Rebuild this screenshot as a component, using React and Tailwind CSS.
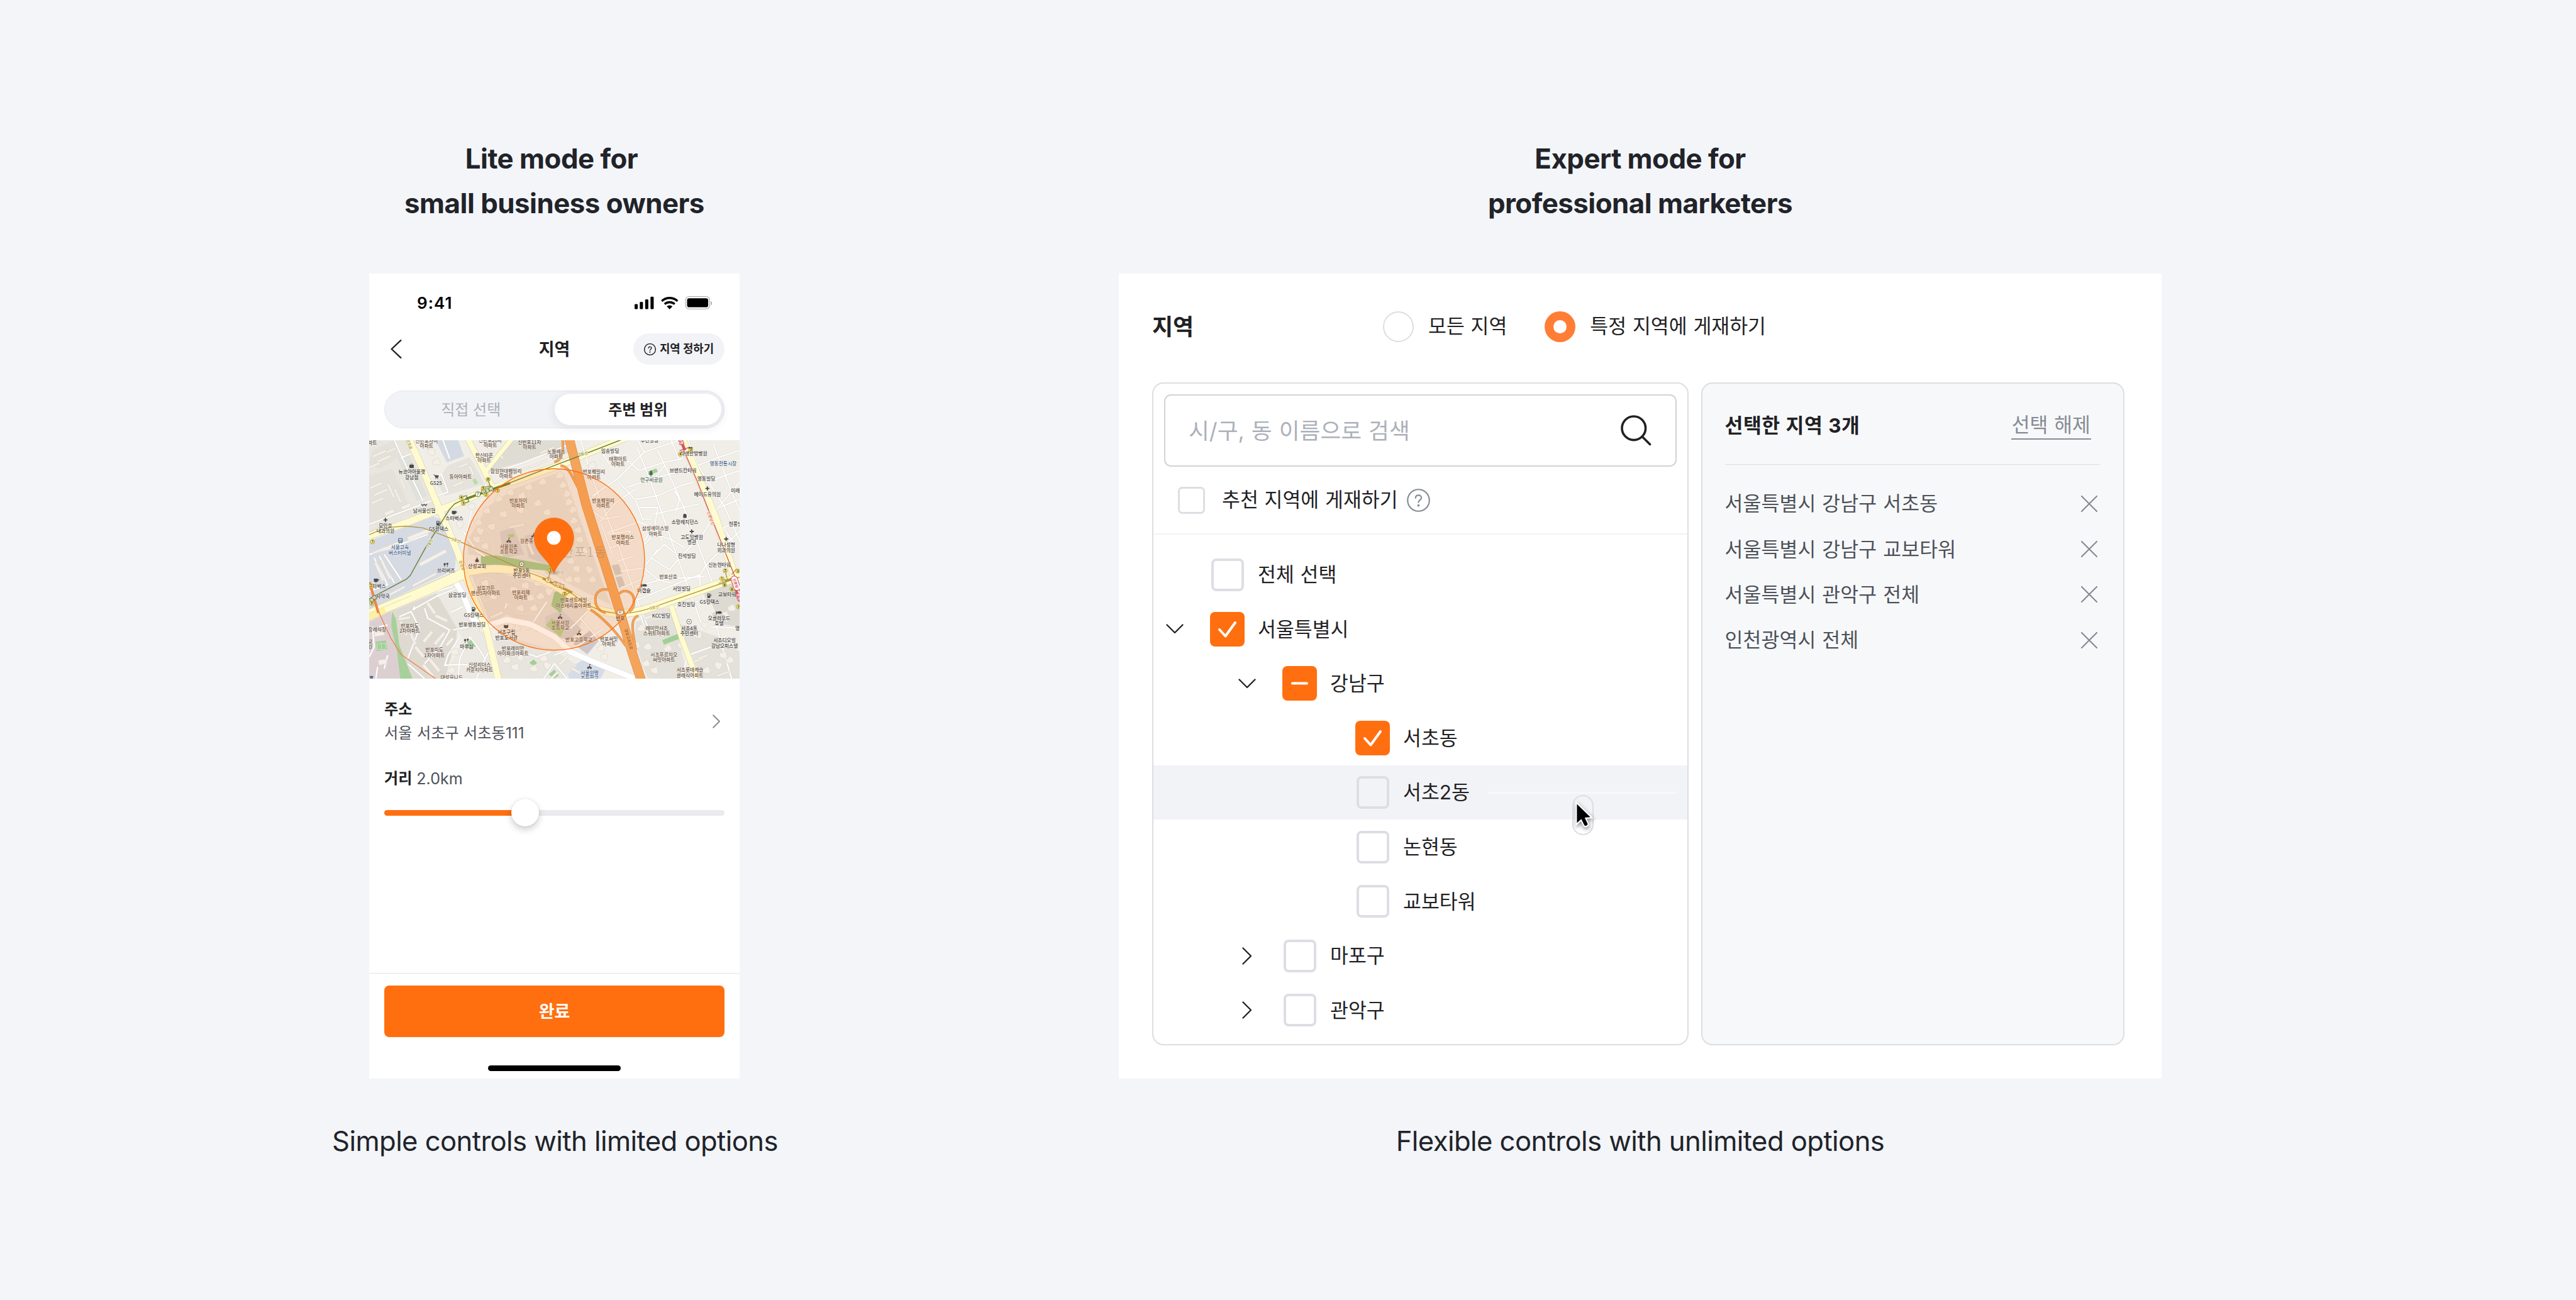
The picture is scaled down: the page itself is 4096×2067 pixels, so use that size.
import React from "react";

const BROWN = "#66503f";
const DARK = "#474440";
const NAVY = "#46628a";

/* ---------- Map data (drawn in a 2208 x 1419 space) ---------- */

const BLOCKS = [
  ["#e9e6df", "M0 0H215L400 400L0 545Z"],
  ["#e4e1da", "M20 60L150 0L200 90L60 170L0 140Z"],
  ["#e4e1da", "M0 210L140 170L250 420L0 500Z"],
  ["#dfe1da", "M165 100L240 90L345 330L285 360Z"],
  ["#d3dae3", "M395 0H530L566 95L463 132Z"],
  ["#e6e3dc", "M470 150L600 100L690 260L450 330L400 250Z"],
  ["#dfdcd4", "M865 0H1170L1104 75L700 190L760 110Z"],
  ["#dfdcd4", "M1104 0H1165L1190 70L1104 110Z"],
  ["#d5dae3", "M0 600L380 455L430 470L520 655L510 770L0 1005Z"],
  ["#dccfd2", "M0 1080L130 1018L190 1419H0Z"],
  ["#dedad1", "M140 1015L270 960L500 870L540 960L520 1180L450 1419H255L185 1240Z"],
  ["#ece9e2", "M400 910L520 860L600 1060L700 1110L740 1419H450L560 1180Z"],
  ["#e6e1d9", "M585 600L700 400L860 290L1104 200L1160 200L1290 560L1440 980L1200 860L1060 770L665 690L590 680Z"],
  ["#e4dfd7", "M610 800L760 785L1000 850L1180 930L1310 1000L1240 1130L1104 1160L820 1040L720 1090Z"],
  ["#d6d2d0", "M780 545L860 520L925 680L800 700Z"],
  ["#d6d2d0", "M925 570L1010 545L1060 740L950 700Z"],
  ["#d6d2d0", "M1050 1050L1150 1010L1270 1130L1190 1190L1050 1150Z"],
  ["#cfc8ca", "M1215 1210L1320 1130L1380 1180L1300 1275Z"],
  ["#d5dce6", "M1180 1360L1290 1300L1410 1360L1380 1419H1190Z"],
  ["#e8e5de", "M740 1190L860 1180L1104 1250L1240 1340L1160 1419H790Z"],
  ["#e3e1d9", "M1590 1080L1810 1030L1900 1419H1660L1580 1200Z"],
  ["#e3e1d9", "M1840 1090L2080 1170L2208 1260V1419H1980Z"],
  ["#dddad2", "M1990 900L2208 830V1110L2070 1090Z"],
  ["#e8e5de", "M1610 1000L1790 1000L1800 1060L1620 1080Z"],
  ["#cfcdca", "M1445 745L1487 738L1508 795L1468 805Z"],
  ["#cfcdca", "M1468 815L1505 810L1527 868L1490 880Z"],
];

const GREENS = [
  ["#a7d09b", "M135 1015L160 1065L180 1220L258 1419H186L165 1255L132 1110Z"],
  ["#a3c98c", "M666 688L760 686L1090 745L1078 778L880 760L666 748Z"],
  ["#a3c98c", "M1104 905L1145 890L1185 925L1140 1028L1085 985Z"],
  ["#a3cf97", "M1652 190L1712 168L1720 188L1660 212Z"],
  ["#a3cf97", "M1747 1190L1845 1150L1855 1180L1757 1217Z"],
  ["#a3cf97", "M38 1200L100 1192L108 1245L46 1255Z"],
  ["#b9dca8", "M615 235L635 228L650 255L628 266Z"],
  ["#a3cf97", "M565 1225L608 1185L637 1225L600 1243Z"],
  ["#b4cf8c", "M826 562L862 556L866 576L832 580Z"],
  ["#b4cf8c", "M1055 1100L1090 1060L1160 1130L1140 1170Z"],
  ["#a3cf97", "M955 1325L980 1305L1002 1325L978 1342Z"],
  ["#a3cf97", "M1070 1395L1104 1365L1130 1400L1104 1419Z"],
];

const MINOR_ROADS = [
  "M0 500L200 425L370 360", "M150 0L200 110L320 360", "M190 105L250 80", "M365 340L470 310L430 200L360 220",
  "M440 0L480 110", "M700 210L900 140L1104 62L1180 30", "M770 250L860 220",
  "M0 680L130 640L350 560", "M30 700L110 860L0 900", "M60 690L150 850M90 680L190 830",
  "M270 990L262 1010L275 1000L400 930L520 880", "M180 1050L250 1020L300 1120L230 1300",
  "M330 1000L350 1060L480 1130L430 1220L330 1330", "M230 1330L330 1419",
  "M400 900L500 870M485 1025L560 990M500 1130L590 1110L640 1080", "M540 1170L470 1280L450 1340L530 1335L640 1340",
  "M530 1419L540 1300L600 1170L660 1250L690 1300L720 1250", "M640 1060L700 1100M690 1300L640 1419",
  "M20 1110L30 1230L0 1290M110 1100L60 1110M50 1350L40 1419M110 1280L90 1360",
  "M560 540L640 660L690 690M580 560L610 420", "M810 1000L820 970M980 1080L1060 960",
  "M1260 0L1350 280L1490 640L1600 960L1660 1110", "M1270 80L1370 30M1330 330L1480 230L1640 70L1600 0",
  "M1370 490L1470 370L1590 290M1430 140L1380 60L1500 90", "M1420 60L1550 130L1610 180",
  "M1600 50L1680 250L1740 420L1810 620L1860 760L1980 1090", "M1720 60L1800 230L1880 410L1960 620L2050 860",
  "M1800 0L1850 120M1640 70L1760 30L1850 0", "M1540 280L1680 230L1880 180L1940 110",
  "M1480 240L1590 360L1630 470L1680 470", "M1590 350L1720 330L1860 270L1930 250M1700 440L1960 380",
  "M1610 180L1760 130L1870 110", "M1420 550L1600 490M1440 640L1580 590M1380 490L1450 680",
  "M1480 720L1580 690M1500 780L1640 760L1720 830L1800 850", "M1590 870L1740 830L2000 810",
  "M1600 950L1770 880L1970 800", "M1680 700L1790 770L1850 700L1990 560L2080 400L2208 250",
  "M1640 620L1700 560L1800 590L1880 640", "M1700 680L1760 620L1820 670M1650 740L1720 650",
  "M1970 800L1975 900L2070 1110L2160 1419", "M1960 820L2010 740L2208 540",
  "M2208 60L2060 110L1960 150M2050 20L2150 280L2208 420", "M1900 0L1960 150L2120 400L2208 600",
  "M2208 180L2040 240M2208 350L2090 400M2208 480L2110 520L2190 640", "M1990 910L2208 830M2040 1110L2208 1120",
  "M1790 1000L1960 960M1860 1419L1900 1280L2040 1230M1840 1080L1880 1180",
  "M1180 1419L1104 1330L1040 1419M1104 1280L1250 1220L1400 1120", "M1200 1120L1330 990M1260 1060L1380 1200",
  "M860 1240L1000 1290L1080 1260", "M1590 480L1690 520L1640 600M1610 400L1720 400L1700 520L1750 600",
  "M1820 300L1850 350L1830 420M1880 420L1900 520M1700 230L1760 150",
  "M1320 350L1400 280M1330 420L1400 470L1500 450M1420 560L1560 540L1500 640",
  "M1500 880L1640 820", "M1585 960L1620 1050L1640 1110",
];

const PATHS_BEIGE = [
  "M740 680C745 620 730 600 640 590M760 560C780 500 850 470 920 480C1000 490 1030 560 1060 640",
  "M880 260L940 430M930 250L960 330C900 380 820 440 740 470", "M600 520C700 500 760 560 740 660",
  "M1104 250C1160 300 1200 420 1220 560C1240 700 1370 780 1340 860", "M640 830C700 800 790 830 770 920L690 960Z",
  "M830 820C900 860 960 900 1000 1000L930 1040M820 970L890 1030L1000 1040",
  "M1220 640C1260 700 1200 760 1160 800C1200 860 1300 840 1340 800", "M1000 860C960 920 980 990 1060 960",
];

const HOUSES = [
  [1033, 248, 0], [950, 280, 10], [840, 310, 25], [910, 330, 20], [770, 350, -10], [1005, 375, 5], [900, 415, 40],
  [1060, 430, 15], [800, 440, 30], [700, 420, 20], [730, 515, 30], [650, 490, 10], [640, 590, 45], [690, 630, 20],
  [660, 540, 60], [1135, 210, -10], [1155, 268, -8], [1180, 320, -30], [1190, 370, -20], [1215, 415, -25],
  [1220, 480, -10], [1245, 535, 20], [1255, 592, 25], [1130, 785, 50], [1235, 765, 40], [1310, 770, 70],
  [1200, 720, 20], [1280, 660, 10], [1330, 830, 0], [1240, 830, 40], [1190, 830, 20], [690, 850, 20], [740, 930, 20],
  [860, 890, 60], [930, 865, 30], [1005, 850, 10], [1070, 900, 60], [960, 940, 10], [1020, 930, 0], [980, 1000, 5],
  [900, 1000, 30], [880, 1120, 0], [940, 1110, 30], [1010, 1120, 0], [370, 70, 40], [400, 130, 10], [610, 395, 25],
  [540, 500, 70], [820, 1310, 0], [870, 1350, 30], [900, 1290, 60], [980, 1360, 20], [1040, 1300, 10], [1060, 1340, 70],
  [490, 1370, 10], [510, 1260, 20], [680, 1130, 20], [1380, 1240, 10], [1400, 1290, 40], [1450, 1210, 20],
  [1660, 1230, 10], [1700, 1280, 50], [1650, 1330, 10], [1700, 1370, 30], [1960, 1160, 30], [2000, 1100, 60],
  [2110, 1280, 30], [2150, 1310, 0], [2080, 1340, 60], [2010, 1370, 20], [1780, 1240, 0], [1860, 1220, 20],
  [1590, 1220, 30], [1620, 1120, 0], [1330, 150, 10], [2160, 1000, 10], [1330, 960, 20],
];

const SLABS = [
  [60, 80, 90, 14, -24], [90, 110, 90, 14, -24], [30, 150, 70, 14, -24], [130, 60, 60, 12, -24], [40, 270, 80, 14, -24],
  [70, 310, 90, 14, -24], [50, 360, 80, 14, -24], [130, 300, 90, 14, 66], [170, 330, 90, 14, 66], [200, 260, 70, 14, 66],
  [120, 430, 60, 22, -22], [220, 395, 60, 22, -22], [500, 210, 60, 14, -22], [560, 150, 60, 14, -22], [530, 260, 70, 14, -22],
  [610, 180, 60, 14, 66], [350, 270, 60, 18, 66], [560, 330, 50, 20, -20], [900, 180, 110, 12, -22], [1010, 140, 110, 12, -22],
  [1060, 60, 90, 12, -22], [720, 50, 70, 12, 45], [780, 90, 50, 12, 45], [300, 560, 150, 24, -22], [100, 640, 170, 14, -22],
  [380, 700, 180, 22, -28], [60, 780, 120, 16, 66], [100, 770, 120, 16, 66], [160, 900, 120, 14, -28], [330, 830, 160, 14, -28],
  [210, 1060, 70, 16, -10], [205, 1120, 90, 16, 66], [260, 1180, 80, 16, 66], [370, 1000, 80, 18, 55], [430, 1060, 80, 18, 25],
  [350, 1170, 80, 18, -50], [420, 1180, 90, 18, -50], [300, 1260, 80, 18, 50], [390, 1340, 90, 18, 50], [350, 1370, 90, 18, 50],
  [480, 1200, 60, 18, -50], [60, 1150, 60, 30, -10], [80, 1320, 50, 30, -10], [760, 1040, 80, 16, -25], [1180, 1240, 50, 18, 40],
  [1160, 1310, 70, 14, -45], [1230, 1370, 60, 14, 30], [1104, 1400, 60, 14, -45], [1680, 1050, 90, 16, -15], [1690, 1130, 80, 14, -15],
  [1870, 1210, 60, 20, 66], [2040, 1000, 60, 30, 66], [2130, 1050, 60, 30, 66], [1700, 1300, 60, 14, 66], [1960, 1310, 70, 12, -20],
  [2110, 1390, 80, 12, -20], [1990, 1290, 60, 12, -20], [880, 510, 90, 16, -10], [960, 640, 90, 16, 66], [1000, 620, 90, 16, 66],
];

/* x, y of the first line's centre, lines, colour */
const LABELS = [
  [20, 16, ["파트"], BROWN], [342, 4, ["신반포자이", "아파트"], BROWN], [722, 0, ["신반포20차", "아파트"], BROWN],
  [956, 10, ["신반포11차", "아파트"], BROWN], [686, 90, ["한신타운", "아파트"], BROWN], [254, 188, ["뉴코아아울렛", "강남점"], DARK],
  [398, 254, ["GS25"], DARK], [545, 216, ["동아아파트"], BROWN], [816, 184, ["잠원현대훼밀리", "아파트"], BROWN],
  [328, 418, ["남서울신협"], DARK], [508, 466, ["스타벅스"], DARK], [97, 508, ["모인호", "내과의원"], DARK],
  [414, 529, ["GS칼텍스"], DARK], [183, 638, ["서울고속", "버스터미널"], NAVY], [458, 777, ["쓰리버즈"], DARK],
  [643, 749, ["산성교회"], DARK], [889, 360, ["반포자이", "아파트"], BROWN], [832, 632, ["서울원촌", "초등학교"], BROWN],
  [966, 601, ["원촌중학교"], BROWN], [909, 774, ["반포1동", "주민센터"], DARK], [695, 880, ["삼호가든", "맨션5차아파트"], BROWN],
  [905, 905, ["반포리체", "아파트"], BROWN], [525, 921, ["삼공빌딩"], DARK], [60, 868, ["타벅스"], DARK], [82, 928, ["사약국"], DARK],
  [624, 1042, ["GS칼텍스"], DARK], [614, 1098, ["반포쌍동빌딩"], DARK], [242, 1104, ["반포미도", "2차아파트"], BROWN],
  [48, 1127, ["장례식장"], BROWN], [6, 1197, ["교", "원"], BROWN], [818, 1144, ["서초구립", "반포도서관"], DARK],
  [389, 1248, ["반포미도", "1차아파트"], BROWN], [581, 1228, ["마루심"], DARK], [857, 1238, ["반포래미안", "아이파크아파트"], BROWN],
  [658, 1336, ["신성리더스", "카운티아파트"], BROWN], [492, 1412, ["대성유니드"], BROWN],
  [1115, 66, ["노블레스", "아파트"], BROWN], [1671, 0, ["우진빌딩"], DARK], [1436, 64, ["임송빌딩"], DARK],
  [1483, 112, ["태평아트", "아파트"], BROWN], [1340, 188, ["반포훼밀리", "아파트"], BROWN], [1395, 360, ["반포훼밀리", "아파트"], BROWN],
  [1935, 80, ["자생한방병원"], DARK], [2110, 138, ["영동전통시장"], NAVY], [1871, 180, ["브랜드칸타워"], DARK],
  [2009, 229, ["영동빌딩"], DARK], [1683, 238, ["언구비공원"], "#4f6d55"], [2016, 321, ["메이드유의원"], DARK], [2183, 300, ["미래"], DARK],
  [1882, 486, ["소망레지던스"], DARK], [1706, 526, ["삼성에이스빌", "아파트"], BROWN], [2183, 498, ["현풍빌"], DARK],
  [1923, 577, ["고도일병원", "별관"], DARK], [1512, 578, ["반포팰리스", "아파트"], BROWN], [2128, 623, ["나나성형", "외과의원"], DARK],
  [1894, 688, ["진석빌딩"], DARK], [2088, 740, ["신논현타워"], DARK], [1783, 811, ["반포산호"], BROWN], [1638, 896, ["더캡슐"], DARK],
  [1862, 885, ["서일빌딩"], DARK], [2134, 918, ["교보타워"], DARK], [2029, 962, ["GS칼텍스"], DARK], [1890, 977, ["호진빌딩"], DARK],
  [1219, 952, ["반포센트레빌", "아스테리움아파트"], BROWN], [1740, 1045, ["KCC빌딩"], DARK], [1497, 1061, ["반포"], DARK],
  [2086, 1060, ["오클라우드", "호텔"], DARK], [1139, 1086, ["서울서원", "초등학교"], BROWN], [1714, 1120, ["래미안서초", "스위트아파트"], BROWN],
  [1908, 1118, ["서초4동", "주민센터"], DARK], [2195, 1120, ["영"], DARK], [1250, 1186, ["반포고등학교"], BROWN],
  [1429, 1182, ["반포써밋", "아파트"], BROWN], [2118, 1192, ["서초디오빌", "강남오피스텔"], DARK], [1757, 1276, ["서초푸르지오", "써밋아파트"], BROWN],
  [1314, 1384, ["서울원명", "초등학교"], NAVY], [1912, 1368, ["서초롯데캐슬", "클래식아파트"], BROWN],
];

const LINE_NAMES = [
  [362, 612, -62, "7호선", "#6f7f3a"], [518, 596, 18, "9호선", "#b08f33"], [1276, 82, -17, "7호선", "#6f7f3a"],
  [1700, 996, -13, "9호선", "#b08f33"], [2036, 464, 70, "신분당선", "#d5505f"],
];

const ROAD_NAMES = [
  [1546, 1184, 74, "경부고속도로", "#9c6232"], [552, 746, 72, "잠원로", "#a59a63"], [236, 14, 70, "신반포로", "#a59a63"],
  [2100, 848, -20, "사평", "#a59a63"],
];

const EXITS = [
  [20, 604, "1"], [549, 341, "4"], [562, 376, "3"], [680, 285, "5"], [709, 233, "6"], [765, 299, "1"], [697, 324, "2"],
  [12, 866, "2"], [15, 972, "3"], [1079, 773, "1"], [1165, 915, "2"], [1855, 83, "4"], [1917, 58, "3"], [2122, 777, "2"],
  [2197, 779, "3"], [2102, 824, "1"], [2119, 861, "9"], [2163, 886, "8"], [2202, 991, "7"],
];

const PLUSES = [[97, 474], [2016, 287], [1923, 543], [2128, 588]];
const CUPS = [[507, 430], [42, 834]];
const PUMPS = [[413, 494], [624, 1006], [2028, 926]];
const SCHOOLS = [[832, 596], [980, 566], [1138, 1050], [1251, 1148], [1313, 1348]];
const TARGETS = [[909, 738], [1907, 1080]];
const FORKS = [[458, 740], [580, 1192]];
const BEDS = [[1638, 866], [2084, 1028]];

function RoadSet({ paths, edge, fill, width }) {
  return (
    <g fill="none" strokeLinejoin="round">
      {paths.map((d) => (
        <path key={"e" + d} d={d} stroke={edge} strokeWidth={width + 4} />
      ))}
      {paths.map((d) => (
        <path key={"f" + d} d={d} stroke={fill} strokeWidth={width} />
      ))}
    </g>
  );
}

function CityMap() {
  return (
    <svg viewBox="0 0 2208 1419" preserveAspectRatio="none" className="block h-full w-full">
      <rect width="2208" height="1419" fill="#f1eee8" />
      {BLOCKS.map(([c, d]) => (
        <path key={d} d={d} fill={c} />
      ))}
      {GREENS.map(([c, d]) => (
        <path key={d} d={d} fill={c} />
      ))}
      <RoadSet paths={MINOR_ROADS} edge="#d9d6ce" fill="#ffffff" width={8} />
      <g fill="none" stroke="#ece6da" strokeWidth="4">
        {PATHS_BEIGE.map((d) => (
          <path key={d} d={d} />
        ))}
      </g>
      <g fill="#f4efe7" stroke="#d8d2c6" strokeWidth="2" strokeLinejoin="round">
        {SLABS.map(([x, y, w, h, r], i) => (
          <rect key={i} x={-w / 2} y={-h / 2} width={w} height={h} transform={`translate(${x} ${y}) rotate(${r})`} />
        ))}
        {HOUSES.map(([x, y, r], i) => (
          <path key={i} d="M-24 -8L-8 -12V-20L14 -23L17 -8L24 -4L22 14L-2 18L-20 12Z" transform={`translate(${x} ${y}) rotate(${r - 10})`} />
        ))}
      </g>
      <g stroke="#ffffff" strokeWidth="2" fill="none" opacity=".8">
        <path d="M48 1210H98V1245H48ZM73 1210V1245" />
      </g>

      <RoadSet
        paths={["M510 835L560 920L615 1060L650 1090", "M715 1100L820 1068L960 1095L1104 1170L1204 1262L1350 1325L1600 1425"]}
        edge="#d9d6ce"
        fill="#ffffff"
        width={34}
      />

      {/* arterial roads */}
      <g fill="none" strokeLinejoin="round">
        {[
          ["#cfcaa9", 4],
          ["#fffbcf", 0],
        ].map(([c, extra]) => (
          <g key={c} stroke={c}>
            <path strokeWidth={38 + extra} d="M236 -10L300 130L408 385L435 445L525 660L572 800L700 1130L772 1430" />
            <path strokeWidth={40 + extra} d="M-10 572L230 488L400 420L520 378L700 300L900 230L1104 160L1330 65L1530 -15" />
            <path strokeWidth={32 + extra} d="M588 -10L690 190L735 280" />
            <path strokeWidth={26 + extra} d="M852 -10L690 190" />
            <path strokeWidth={60 + extra} d="M-10 1040L250 930L560 795" />
            <path strokeWidth={46 + extra} d="M540 800C640 765 760 755 880 780C1000 805 1090 850 1165 900C1260 960 1350 1030 1500 1030C1600 1030 1700 990 1800 955L2218 808" />
            <path strokeWidth={44 + extra} d="M1865 -10L2060 450L2218 930" />
            <path strokeWidth={30 + extra} d="M1800 985L1870 1200L1958 1430" />
          </g>
        ))}
        <path stroke="#d6d3c6" strokeWidth="3" d="M0 1006L240 905L520 780M0 1030L250 925M0 1075L150 1010" />
        <path stroke="#fdf0a0" strokeWidth="36" d="M0 1052L95 1010" />
      </g>

      {/* expressway */}
      <g fill="none">
        {[
          ["#cf8748", 4],
          ["#f4a45b", 0],
        ].map(([c, extra]) => (
          <g key={c} stroke={c}>
            <g strokeWidth={11 + extra}>
              <path d="M1152 -10C1160 60 1150 120 1104 130" />
              <path d="M1140 152C1190 150 1210 220 1244 280" />
              <path d="M1425 890C1380 880 1347 905 1348 950C1350 1000 1380 1020 1410 1028" />
              <path d="M1490 915C1520 880 1575 900 1578 950C1580 990 1570 1010 1550 1020" />
              <path d="M1320 1008C1400 1060 1480 1150 1530 1225" />
              <path d="M1605 1045C1550 1060 1572 1150 1590 1250" />
            </g>
            <path strokeWidth={52 + extra} d="M1192 -10L1292 380L1494 1020L1560 1240L1622 1430" />
          </g>
        ))}
      </g>

      {/* subway lines */}
      <g fill="none" strokeLinejoin="round">
        <path stroke="#6f7f3a" strokeWidth="5.5" d="M0 945L225 825L245 805L340 632L480 410L510 378L545 362L840 253L1104 150L1274 86L1500 -2" />
        <path stroke="#6f7f3a" strokeWidth="14" d="M575 350L750 286L840 255" />
        <path stroke="#6f7f3a" strokeWidth="5" d="M560 335L580 330L595 365L575 372M668 285L725 272L745 300M722 275L709 240" />
        <path stroke="#b5963e" strokeWidth="5" d="M0 562L100 520L220 511L320 522L420 558L560 612L860 745L960 790L1060 828L1165 885L1220 920C1300 985 1380 1030 1500 1031C1600 1030 1680 1000 1760 970L2208 815" />
        <path stroke="#b5963e" strokeWidth="14" d="M1035 822L1210 908M2120 840L2160 826" />
        <path stroke="#b5963e" strokeWidth="5" d="M1079 780L1070 820M1170 925L1195 905M2125 790L2135 830M2110 825L2140 835M2160 800L2190 765" />
        <path stroke="#f0814a" strokeWidth="5" d="M0 850L60 1030L130 1180L190 1275L400 1422" />
        <path stroke="#f0814a" strokeWidth="15" d="M2 845L55 1028" />
        <path stroke="#d5505f" strokeWidth="5" d="M1855 -5L1875 60L1954 240L2064 520L2185 825L2208 900M1850 62L1910 42" />
        <path stroke="#d5505f" strokeWidth="16" d="M1858 0L1882 60M2185 890L2212 960" />
      </g>

      <g fontFamily="'Noto Sans CJK KR', sans-serif" textAnchor="middle">
        {ROAD_NAMES.map(([x, y, r, t, c], i) => (
          <text key={i} transform={`translate(${x} ${y}) rotate(${r})`} dy="8" fontSize="23" fontWeight="500" fill={c}>
            {t}
          </text>
        ))}
        {LINE_NAMES.map(([x, y, r, t, c], i) => (
          <text key={i} transform={`translate(${x} ${y}) rotate(${r})`} dy="8" fontSize="23" fontWeight="500" fill={c} stroke="#fdfadb" strokeWidth="5" paintOrder="stroke">
            {t}
          </text>
        ))}
        {LABELS.map(([x, y, lines, c], i) => (
          <text key={i} fontSize="29" fontWeight="500" fill={c} stroke="#ffffff" strokeOpacity=".6" strokeWidth="4" strokeLinejoin="round" paintOrder="stroke">
            {lines.map((line, j) => (
              <tspan key={j} x={x} y={y + 11 + j * 31.5}>
                {line}
              </tspan>
            ))}
          </text>
        ))}
      </g>

      {/* places */}
      <g fill="#4b4845" stroke="#4b4845">
        {PLUSES.map(([x, y], i) => (
          <path key={i} fill="none" strokeWidth="7" d={`M${x - 12} ${y}h24M${x} ${y - 12}v24`} />
        ))}
        {CUPS.map(([x, y], i) => (
          <g key={i} transform={`translate(${x} ${y})`}>
            <path stroke="none" d="M-14 -10H10V2C10 8 6 11 -2 11C-10 11 -14 8 -14 2Z" />
            <path fill="none" strokeWidth="3" d="M10 -6H15V2H9" />
          </g>
        ))}
        {PUMPS.map(([x, y], i) => (
          <g key={i} transform={`translate(${x} ${y})`}>
            <path fillRule="evenodd" stroke="none" d="M-12 -13H5V13H-12ZM-8 -9V-2H1V-9Z" />
            <path fill="none" strokeWidth="3" d="M5 2H10V-6L7 -10" />
          </g>
        ))}
        {SCHOOLS.map(([x, y], i) => (
          <path key={i} stroke="none" transform={`translate(${x} ${y})`} d="M-1 -15L10 -12L1 -8V-4L8 2H13V13H3V6H-3V13H-13V2H-8L-1 -4Z" />
        ))}
        {TARGETS.map(([x, y], i) => (
          <g key={i}>
            <circle cx={x} cy={y} r="14" fill="#fff" strokeWidth="3" />
            <circle cx={x} cy={y} r="4" stroke="none" />
          </g>
        ))}
        {FORKS.map(([x, y], i) => (
          <path key={i} transform={`translate(${x} ${y})`} strokeWidth="3" d="M-8 -8a5 6 0 1 0 .1 0ZM-8 0V14M4 -10V-2Q8 4 12 -2V-10M8 -10V14" />
        ))}
        {BEDS.map(([x, y], i) => (
          <path key={i} transform={`translate(${x} ${y})`} fill="none" strokeWidth="5" d="M-14 -10V10M-14 -3H14V2H-8M-6 -7H14" />
        ))}
        <path fill="none" strokeWidth="3.5" d="M312 378L320 392L328 378L336 392L344 378M310 385H346" />
        <path stroke="none" d="M803 1098L816 1102L829 1098V1116L816 1120L803 1116Z" />
        <path stroke="none" d="M240 146H266V165H240Z" />
        <path fill="none" strokeWidth="3" d="M247 146Q253 134 259 146" />
        <path strokeWidth="3" d="M384 206H390L396 222H410L413 210H392" />
        <circle cx="397" cy="228" r="2" />
        <circle cx="408" cy="228" r="2" />
        <path strokeWidth="3" d="M643 697V710M638 701H648M634 724V712L643 706L652 712V724Z" />
        <path stroke="none" d="M1872 444Q1882 430 1892 444V462H1872Z" />
        <path stroke="none" d="M1904 40H1924L1930 46L1924 52H1904Z" />
      </g>
      <path fill="#3f6b4b" d="M1680 178L1690 192H1685L1694 205H1683V215H1677V205H1666L1675 192H1670Z" />
      <g fill="none" stroke={NAVY} strokeWidth="4">
        <rect x="175" y="585" width="22" height="22" rx="3" />
        <path d="M175 598H197M179 607V613M193 607V613" />
      </g>
      <path fill={NAVY} d="M0 1408L14 1402L28 1408L14 1415ZM6 1413V1419H22V1413Z" />

      {/* station names */}
      <g fontFamily="'Noto Sans CJK KR', sans-serif" fontWeight="700" fill="#fff" textAnchor="middle" strokeLinejoin="round" paintOrder="stroke" strokeWidth="8">
        <text transform="translate(704 299) rotate(-19)" dy="9" fontSize="25" stroke="#6f7f3a">반포역</text>
        <text transform="translate(1126 862) rotate(22)" dy="9" fontSize="25" stroke="#b5963e">사평역</text>
        <text transform="translate(22 944) rotate(-35)" dy="9" fontSize="23" stroke="#6f7f3a">속역</text>
        <text transform="translate(1859 4) rotate(72)" dy="9" fontSize="23" stroke="#d5505f">현역</text>
        <text transform="translate(2204 932) rotate(72)" dy="9" fontSize="23" stroke="#d5505f">논현</text>
      </g>
      <rect x="2140" y="832" width="88" height="38" rx="19" fill="#fff" stroke="#d5505f" strokeWidth="4" transform="rotate(72 2184 851)" />
      <text transform="translate(2184 851) rotate(72)" dy="8" fontSize="22" fontWeight="700" textAnchor="middle" fill="#d5505f" fontFamily="'Noto Sans CJK KR', sans-serif">
        신분당
      </text>
      <g fontFamily="Inter, sans-serif" fontWeight="700" textAnchor="middle">
        <circle cx="648" cy="321" r="15" fill="#fff" stroke="#6f7f3a" strokeWidth="4" />
        <text x="648" y="329" fontSize="23" fill="#6f7f3a">7</text>
        <circle cx="1067" cy="832" r="15" fill="#fff" stroke="#b5963e" strokeWidth="4" />
        <text x="1067" y="840" fontSize="23" fill="#b5963e">9</text>
        <ellipse cx="1497" cy="1025" rx="20" ry="15" fill="#fff" stroke="#9c7a50" strokeWidth="4" />
        <text x="1497" y="1031" fontSize="16" fill="#8a6a44">IC</text>
        {EXITS.map(([x, y, n], i) => (
          <g key={i}>
            <circle cx={x} cy={y} r="12.5" fill="#f7e860" stroke="#8b8440" strokeWidth="2.5" />
            <text x={x} y={y + 7} fontSize="19" fill="#33312a">{n}</text>
          </g>
        ))}
      </g>

      <text x="1150" y="694" fontSize="74" letterSpacing="6" fill="#8f7f78" fillOpacity=".55" fontWeight="300" fontFamily="'Noto Sans CJK KR', sans-serif">
        반포1동
      </text>

      {/* targeting radius */}
      <circle cx="1101.5" cy="709.5" r="540" fill="#ff6f0f" fillOpacity=".15" stroke="#ff6f0f" strokeWidth="5" />

      {/* pin */}
      <ellipse cx="1101" cy="785" rx="56" ry="18" fill="#000" fillOpacity=".06" />
      <ellipse cx="1101" cy="787" rx="34" ry="11" fill="#000" fillOpacity=".09" />
      <path
        d="M1101.5 462C1167 462 1220 514 1220 580C1220 635 1190 668 1158 705C1130 738 1112 764 1101.5 793C1091 764 1073 738 1045 705C1013 668 983 635 983 580C983 514 1036 462 1101.5 462Z"
        fill="#ff6f0f"
        stroke="#e8650f"
        strokeWidth="2"
      />
      <circle cx="1101" cy="581" r="41" fill="#fff" />
    </svg>
  );
}

/* ---------- Icons ---------- */

function StatusIcons() {
  return (
    <svg viewBox="62 57 463 78" className="h-[20.8px] w-[123.5px]">
      <rect x="62" y="104" width="19" height="30" rx="5" />
      <rect x="93" y="91" width="19" height="43" rx="5" />
      <rect x="125" y="76" width="19" height="58" rx="5" />
      <rect x="157" y="60" width="19" height="74" rx="5" />
      <g fill="none" stroke="#000" strokeWidth="13">
        <path d="M224 86C251 61 291 61 318 86" />
        <path d="M241 104C258 89 284 89 301 104" />
      </g>
      <path d="M271 135L254 118C264 109 278 109 288 118Z" />
      <rect x="366" y="59" width="144" height="74" rx="21" fill="none" stroke="#a6a6a6" strokeWidth="4" />
      <rect x="375" y="69" width="126" height="54" rx="13" />
      <path d="M517 87C527 90 527 108 517 111Z" fill="#a6a6a6" />
    </svg>
  );
}

function Help({ className, stroke }) {
  return (
    <svg viewBox="0 0 24 24" fill="none" stroke="currentColor" strokeWidth={stroke} strokeLinecap="round" strokeLinejoin="round" className={className}>
      <circle cx="12" cy="12" r="11.2" />
      <path d="M9 9.6C9 7.8 10.3 6.7 12 6.7C13.7 6.7 15 7.8 15 9.4C15 11.6 12 11.7 12 14.1" />
      <circle cx="12" cy="17.3" r=".5" fill="currentColor" />
    </svg>
  );
}

function ChevronDown() {
  return (
    <svg viewBox="0 0 28 16" fill="none" stroke="#212124" strokeWidth="2.3" strokeLinecap="round" strokeLinejoin="round" className="h-[16px] w-[28px]">
      <path d="M1.5 1.5L14 14L26.5 1.5" />
    </svg>
  );
}

function ChevronRight({ className, stroke, width }) {
  return (
    <svg viewBox="0 0 16 28" fill="none" stroke={stroke} strokeWidth={width} strokeLinecap="round" strokeLinejoin="round" className={className}>
      <path d="M1.5 1.5L14 14L1.5 26.5" />
    </svg>
  );
}

function Cross() {
  return (
    <svg viewBox="0 0 26 26" stroke="#868b94" strokeWidth="2.2" strokeLinecap="round" className="h-[26px] w-[26px]">
      <path d="M1 1L25 25M25 1L1 25" />
    </svg>
  );
}

function Checkbox({ state }) {
  if (state === "off") {
    return (
      <span className="flex w-[55px] shrink-0 justify-center">
        <span className="h-[52px] w-[52px] rounded-[8px] border-[4px] border-[#dcdee3]" />
      </span>
    );
  }
  return (
    <span className="flex h-[55px] w-[55px] shrink-0 items-center justify-center rounded-[8px] bg-[#ff6f0f]">
      <svg viewBox="0 0 55 55" fill="none" stroke="#fff" strokeWidth="4" strokeLinecap="round" strokeLinejoin="round" className="h-full w-full">
        {state === "on" ? <path d="M15 28L24.5 38.5L40 17" /> : <path d="M16 27.5H39" />}
      </svg>
    </span>
  );
}

/* ---------- Lite mode ---------- */

function Phone() {
  return (
    <div className="mt-[76px] flex h-[1280px] w-[589px] flex-col bg-white">
      <div className="flex h-[93px] items-center justify-between pr-[44px] pl-[76px]">
        <span className="text-[26px] font-semibold tracking-[1px] text-black">9:41</span>
        <StatusIcons />
      </div>
      <div className="grid h-[54px] grid-cols-[1fr_auto_1fr] items-center px-[24px]">
        <svg viewBox="0 0 18 30" fill="none" stroke="#212124" strokeWidth="2.4" strokeLinecap="round" strokeLinejoin="round" className="ml-[10px] h-[30px] w-[18px]">
          <path d="M16.3 1.2L1.6 15L16.3 28.8" />
        </svg>
        <span className="pt-[1px] text-[27px] font-bold">지역</span>
        <div className="flex h-[50px] w-[145px] items-center gap-[6px] justify-self-end rounded-full bg-[#f2f3f7] pl-[17px]">
          <Help className="h-[19px] w-[19px] shrink-0" stroke="1.7" />
          <span className="text-[17.8px] font-bold whitespace-nowrap">지역 정하기</span>
        </div>
      </div>
      <div className="mx-[24px] mt-[39px] flex h-[60px] shrink-0 rounded-full border border-[#e6e7ec] bg-[#f2f3f7] p-[4px] text-[24px]">
        <div className="flex flex-1 items-center justify-center pt-[1px] text-[#adb1ba]">직접 선택</div>
        <div className="flex flex-1 items-center justify-center rounded-full bg-white pt-[1px] font-bold shadow-[0_3px_14px_4px_rgba(0,0,0,0.06)]">
          주변 범위
        </div>
      </div>
      <div className="mt-[19px] h-[379px] shrink-0">
        <CityMap />
      </div>
      <div className="mx-[24px] mt-[30px] flex items-center justify-between pr-[7px] text-[24.1px] leading-[38px]">
        <div>
          <div className="font-bold">주소</div>
          <div className="tracking-[0.1px] text-[#4d5159] [word-spacing:0.5px]">서울 서초구 서초동111</div>
        </div>
        <ChevronRight className="h-[22px] w-[12.5px]" stroke="#868b94" width="2.4" />
      </div>
      <div className="mx-[24px] mt-[34px] flex gap-[7px] text-[24.1px] leading-[38px]">
        <span className="font-bold">거리</span>
        <span className="text-[25px] text-[#4d5159]">2.0km</span>
      </div>
      <div className="mx-[24px] mt-[13px] flex h-[45px] items-center">
        <div className="relative h-[9px] w-full rounded-full bg-[#eaebee]">
          <div className="h-full w-[224px] rounded-full bg-[#ff6f0f]" />
          <div className="absolute top-[-18px] left-[202px] h-[44px] w-[44px] rounded-full bg-white shadow-[0_5px_12px_rgba(0,0,0,0.2),0_0_2px_rgba(0,0,0,0.15)]" />
        </div>
      </div>
      <div className="mt-auto flex h-[168px] flex-col items-center border-t border-[#e1e3e8] px-[24px] pt-[19px]">
        <div className="flex h-[82px] w-full shrink-0 items-center justify-center rounded-[8px] bg-[#ff6f0f] text-[27px] font-bold text-white">
          완료
        </div>
        <div className="mt-[45px] h-[9px] w-[211px] rounded-full bg-black" />
      </div>
    </div>
  );
}

/* ---------- Expert mode ---------- */

const TREE = [
  { label: "전체 선택", indent: "pl-[17px]", state: "off" },
  { label: "서울특별시", indent: "pl-[17px]", state: "on", arrow: "down" },
  { label: "강남구", indent: "pl-[132px]", state: "mixed", arrow: "down" },
  { label: "서초동", indent: "pl-[248px]", state: "on" },
  { label: "서초2동", indent: "pl-[248px]", state: "off", hover: true },
  { label: "논현동", indent: "pl-[248px]", state: "off" },
  { label: "교보타워", indent: "pl-[248px]", state: "off" },
  { label: "마포구", indent: "pl-[132px]", state: "off", arrow: "right" },
  { label: "관악구", indent: "pl-[132px]", state: "off", arrow: "right" },
];

const SELECTED = ["서울특별시 강남구 서초동", "서울특별시 강남구 교보타워", "서울특별시 관악구 전체", "인천광역시 전체"];

function Pointer() {
  return (
    <>
      <div className="absolute top-[42px] right-[17px] h-[3px] w-[299px] bg-[#f7f8fa]" />
      <div className="absolute top-[47px] right-[149px] z-10 h-[64px] w-[34px] rounded-full border-2 border-[#dcdee3]" />
      <svg viewBox="140 90 130 180" className="absolute top-[55px] right-[147px] z-10 h-[48px] w-[34.7px] overflow-visible drop-shadow-[1px_3px_3px_rgba(0,0,0,0.45)]">
        <path
          d="M164 114V227L190 203L207 238Q211 247 220 243Q231 239 227 230L210 195L244 192Z"
          fill="#000"
          stroke="#fff"
          strokeWidth="16"
          strokeLinejoin="miter"
          paintOrder="stroke"
        />
      </svg>
    </>
  );
}

function TreeRow({ label, indent, state, arrow, hover }) {
  return (
    <div className={`${indent} ${hover ? "bg-[#f2f3f7]" : ""} relative flex h-[86.6px] items-center`}>
      <span className="mr-[40px] flex w-[33px] shrink-0 justify-center">
        {arrow === "down" && <ChevronDown />}
        {arrow === "right" && <ChevronRight className="h-[28px] w-[16px]" stroke="#212124" width="2.3" />}
      </span>
      <Checkbox state={state} />
      <span className="ml-[21px] pt-[2px]">{label}</span>
      {hover && <Pointer />}
    </div>
  );
}

function ExpertCard() {
  return (
    <div className="mt-[76px] h-[1280px] w-[1658px] bg-white pt-[54px] pl-[53px] text-[31.4px] [word-spacing:1px]">
      <div className="flex h-[60px] items-center">
        <span className="w-[367px] pt-[2px] text-[36px] font-bold">지역</span>
        <span className="h-[49px] w-[49px] rounded-full border-[2px] border-[#dcdee3]" />
        <span className="ml-[23px] pt-[1px]">모든 지역</span>
        <span className="ml-[60px] flex h-[49px] w-[49px] items-center justify-center rounded-full bg-[#ff7e36]">
          <span className="h-[21px] w-[21px] rounded-full bg-white" />
        </span>
        <span className="ml-[23px] pt-[1px]">특정 지역에 게재하기</span>
      </div>

      <div className="mt-[58.5px] flex gap-[20px]">
        <div className="h-[1054px] w-[853px] rounded-[18px] border-2 border-[#dcdee3]">
          <div className="mx-[17px] mt-[17px] flex h-[115.5px] items-center justify-between rounded-[11px] border-2 border-[#d1d3d8] pr-[38px] pl-[37px]">
            <span className="pt-[3px] text-[35.7px] text-[#adb1ba]">시/구, 동 이름으로 검색</span>
            <svg viewBox="0 0 49 49" fill="none" stroke="#212124" strokeWidth="3.6" strokeLinecap="round" className="h-[49px] w-[49px]">
              <circle cx="20.8" cy="20.8" r="18.8" />
              <path d="M34.5 34.5L46.5 46.5" />
            </svg>
          </div>
          <div className="flex h-[106px] items-center pl-[39px]">
            <span className="h-[43px] w-[43px] rounded-[7px] border-[3.5px] border-[#dcdee3]" />
            <span className="ml-[27px] pt-[1px] font-normal">추천 지역에 게재하기</span>
            <Help className="ml-[14.5px] h-[37px] w-[37px] text-[#868b94]" stroke="1.4" />
          </div>
          <div className="h-[2.4px] bg-[#f2f3f5]" />
          <div className="pt-[20px]">
            {TREE.map((row) => (
              <TreeRow key={row.label} {...row} />
            ))}
          </div>
        </div>

        <div className="h-[1054px] w-[673px] rounded-[18px] border-2 border-[#dcdee3] bg-[#f7f8fa] pr-[37px] pl-[35.5px]">
          <div className="flex h-[129px] items-center justify-between border-b-[1.6px] border-[#dcdee3] pt-[6px]">
            <span className="pt-[2px] font-bold tracking-[0.5px]">선택한 지역 3개</span>
            <span className="mr-[14px] border-b-[2.5px] border-[#868b94] px-[1px] leading-[42px] text-[#868b94]">선택 해제</span>
          </div>
          <div className="pt-[26.5px]">
            {SELECTED.map((name) => (
              <div key={name} className="flex h-[72.2px] items-center justify-between pr-[4px] text-[#4d5159]">
                <span className="pt-[2px] tracking-[0.1px]">{name}</span>
                <Cross />
              </div>
            ))}
          </div>
        </div>
      </div>
    </div>
  );
}

export default function App() {
  return (
    <div className="flex h-[2067px] w-[4096px] overflow-hidden bg-[#f3f5f9] pt-[218px] font-[Inter,'Noto_Sans_CJK_KR',sans-serif] leading-none text-[#212124]">
      <section className="ml-[507px] flex w-[749px] flex-col items-center">
        <h2 className="text-center text-[43.8px] leading-[70.5px] font-bold tracking-[-0.5px] text-[#212329]">
          <span className="mr-[9px] inline-block">Lite mode for</span>
          <br />
          small business owners
        </h2>
        <Phone />
        <p className="mt-[65px] pl-[2px] text-[43.6px] leading-[70.5px] tracking-[-0.57px] whitespace-nowrap text-[#212329]">
          Simple controls with limited options
        </p>
      </section>
      <section className="ml-[523px] flex w-[1658px] flex-col items-center">
        <h2 className="text-center text-[43.8px] leading-[70.5px] font-bold tracking-[-0.5px] text-[#212329]">
          Expert mode for
          <br />
          professional marketers
        </h2>
        <ExpertCard />
        <p className="mt-[65px] text-[43.6px] leading-[70.5px] tracking-[-0.57px] whitespace-nowrap text-[#212329]">
          Flexible controls with unlimited options
        </p>
      </section>
    </div>
  );
}
